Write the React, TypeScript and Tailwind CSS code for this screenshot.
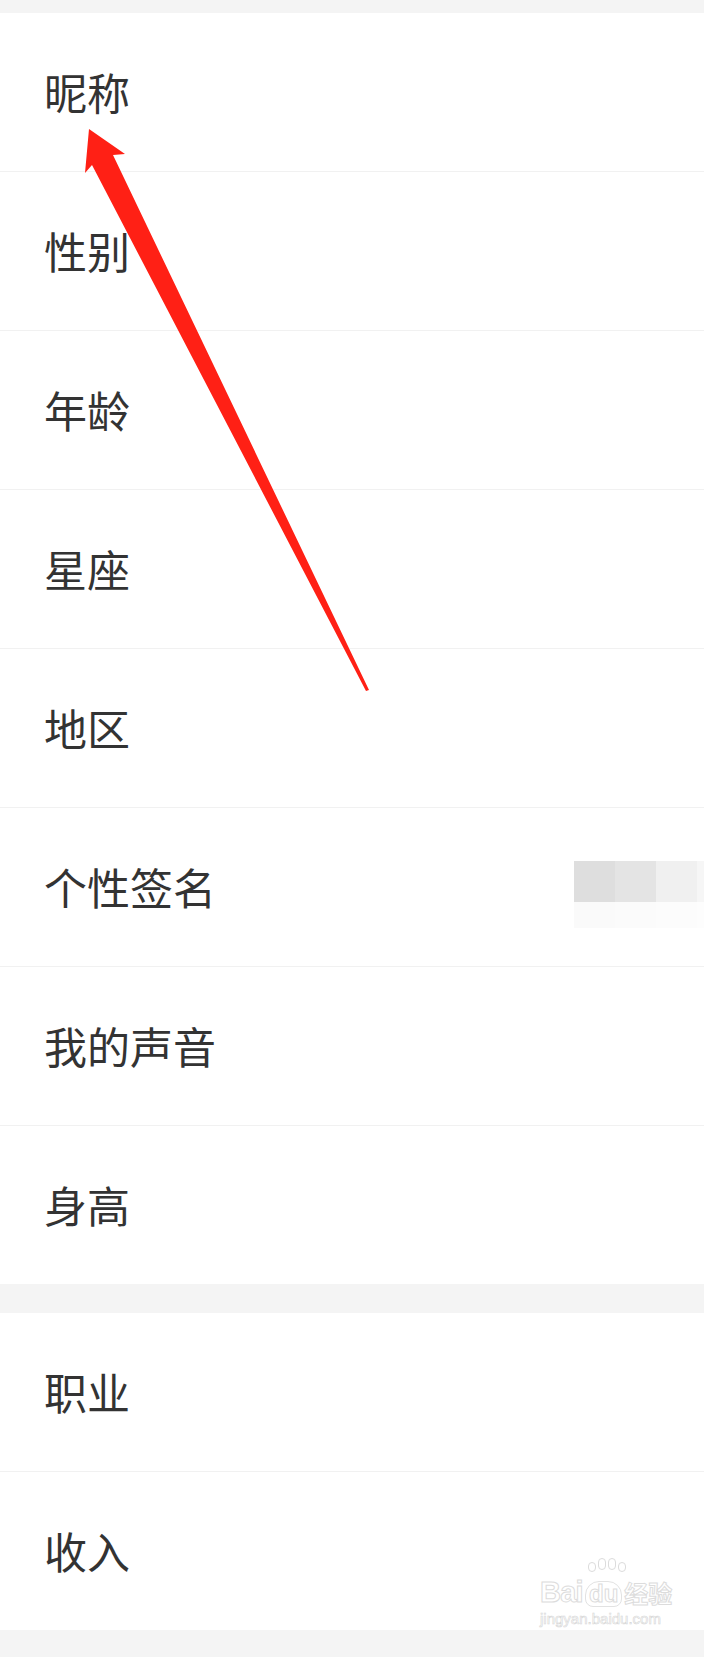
const groups: string[][] = [
  ['昵称', '性别', '年龄', '星座', '地区', '个性签名', '我的声音', '身高'],
  ['职业', '收入'],
];

// pixelated blur over the hidden signature text
const mosaicTop = ['bg-[#dedede]', 'bg-[#e4e4e4]', 'bg-[#f0f0f0]', 'bg-[#f6f6f6]'];
const mosaicBottom = ['bg-[#fafafa]', 'bg-[#fbfbfb]', 'bg-[#fcfcfc]', 'bg-[#fdfdfd]'];

function Mosaic() {
  return (
    <div className="ml-auto mt-[53px] self-start grid grid-cols-[41px_41px_41px_7px] grid-rows-[41px_26px]">
      {mosaicTop.map((c, i) => (
        <div key={'t' + i} className={c} />
      ))}
      {mosaicBottom.map((c, i) => (
        <div key={'b' + i} className={c} />
      ))}
    </div>
  );
}

function Row({ label, last }: { label: string; last: boolean }) {
  return (
    <div
      className={
        last
          ? 'flex h-[158px] items-center pl-[44px]'
          : 'flex h-[159px] items-center pl-[44px] border-b border-[#f1f1f1]'
      }
    >
      <span className="text-[43px] leading-none text-[#333333] pb-[2px]">{label}</span>
      {label === '个性签名' && <Mosaic />}
    </div>
  );
}

function Arrow() {
  return (
    <svg className="absolute left-0 top-0 pointer-events-none" width="704" height="760" viewBox="0 0 704 760">
      <polygon
        fill="#ff2015"
        points="89,129 125,154 113,155 369,690 366,691 92,165 85,173"
      />
    </svg>
  );
}

function Watermark() {
  return (
    <div className="absolute left-[540px] top-[1578px] pointer-events-none flex flex-col items-start text-white [-webkit-text-stroke:1px_#dcdcdc] font-['Liberation_Sans','Noto_Sans_CJK_SC',sans-serif]">
      <div className="flex items-end gap-[2px]">
        <span className="text-[29px] leading-none font-bold tracking-tight">Bai</span>
        <span className="relative text-[24px] leading-none font-bold px-[3px] rounded-t-[14px] rounded-b-[8px] border border-[#e2e2e2]">
          <span className="absolute -top-[20px] left-[2px] flex gap-[2px]">
            <span className="w-[8px] h-[10px] rounded-full border border-[#dcdcdc]" />
            <span className="w-[8px] h-[12px] rounded-full border border-[#dcdcdc] -mt-[4px]" />
            <span className="w-[8px] h-[12px] rounded-full border border-[#dcdcdc] -mt-[4px]" />
            <span className="w-[8px] h-[10px] rounded-full border border-[#dcdcdc]" />
          </span>
          du
        </span>
        <span className="text-[24px] leading-none font-bold">经验</span>
      </div>
      <span className="text-[15px] leading-none mt-[4px] [-webkit-text-stroke:0.6px_#d6d6d6]">jingyan.baidu.com</span>
    </div>
  );
}

export default function App() {
  return (
    <div
      className="relative w-[704px] h-[1657px] overflow-hidden bg-[#f4f4f4] pt-[13px] font-['Noto_Sans_CJK_SC','Noto_Sans',sans-serif]"
    >
      <div className="flex flex-col gap-[29px]">
        {groups.map((g, gi) => (
          <div key={gi} className="bg-white">
            {g.map((label, i) => (
              <Row key={label} label={label} last={i === g.length - 1} />
            ))}
          </div>
        ))}
      </div>
      <Arrow />
      <Watermark />
    </div>
  );
}
